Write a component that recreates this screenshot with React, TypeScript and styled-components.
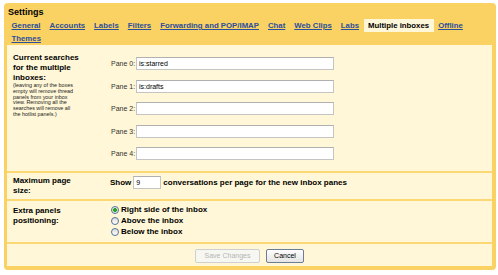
import styled, { createGlobalStyle } from 'styled-components';

const GlobalStyle = createGlobalStyle`
  html, body {
    margin: 0;
    padding: 0;
    background: #fff;
  }
  body {
    font-family: "Liberation Sans", Arial, sans-serif;
    color: #000;
  }
`;

const Frame = styled.div`
  margin: 3px 0 0 4px;
  width: 492px;
  height: 267px;
  box-sizing: border-box;
  background: #fad163;
  border-radius: 4px;
  padding: 3px 4px 4px 3px;
  display: flex;
  flex-direction: column;
`;

const Title = styled.div`
  font-size: 9px;
  font-weight: bold;
  line-height: 13px;
  padding-left: 1px;
`;

const Tabs = styled.div`
  display: flex;
  flex-wrap: wrap;
`;

const Tab = styled.a<{ $active?: boolean }>`
  display: block;
  padding: 0 4.5px;
  height: 13px;
  line-height: 13px;
  font-size: 7.8px;
  font-weight: bold;
  cursor: pointer;
  color: ${(p) => (p.$active ? '#000' : '#2a4f9c')};
  background: ${(p) => (p.$active ? '#fff7d7' : 'transparent')};
  text-decoration: ${(p) => (p.$active ? 'none' : 'underline')};
`;

const Panel = styled.div`
  flex: 1;
  background: #fff7d7;
  display: flex;
  flex-direction: column;
`;

const Section = styled.div<{ $divider?: boolean }>`
  display: grid;
  grid-template-columns: 103px 1fr;
  border-top: ${(p) => (p.$divider ? '2px solid #fcd874' : 'none')};
`;

const Label = styled.div<{ $top: number }>`
  padding: ${(p) => p.$top}px 0 0 6px;
  font-size: 8px;
  font-weight: bold;
  line-height: 10px;
`;

const Hint = styled.div`
  font-size: 5.4px;
  font-weight: normal;
  line-height: 5.9px;
  color: #222;
`;

const Field = styled.div<{ $top: number; $bottom: number; $gap?: number }>`
  padding: ${(p) => p.$top}px 0 ${(p) => p.$bottom}px 0;
  display: flex;
  flex-direction: column;
  gap: ${(p) => p.$gap ?? 0}px;
`;

const PaneRow = styled.div`
  display: flex;
  align-items: center;
  height: 13px;
`;

const PaneName = styled.span`
  width: 25px;
  padding-left: 1px;
  font-size: 7px;
  color: #333;
`;

const TextBox = styled.input<{ $w: number }>`
  box-sizing: border-box;
  width: ${(p) => p.$w}px;
  height: 13px;
  margin: 0;
  padding: 0 2px;
  border: 1px solid #c4c4c4;
  border-top-color: #b0b0b0;
  background: #fff;
  font-family: "Liberation Sans", Arial, sans-serif;
  font-size: 7px;
  color: #000;
  outline: none;
`;

const InlineRow = styled.div`
  display: flex;
  align-items: center;
  height: 13px;
  font-size: 8px;
  font-weight: bold;
  gap: 2px;
`;

const RadioRow = styled.label`
  display: flex;
  align-items: center;
  height: 11px;
  font-size: 8px;
  font-weight: bold;
  gap: 2px;
`;

const Radio = styled.span<{ $checked?: boolean }>`
  width: 8px;
  height: 8px;
  box-sizing: border-box;
  border-radius: 50%;
  margin-left: 1px;
  border: 1px solid #55709f;
  background: ${(p) =>
    p.$checked
      ? 'radial-gradient(circle, #2b9e2b 0 1.6px, #d8ecd0 2.2px, #fff 100%)'
      : 'linear-gradient(#dedcd4, #fff)'};
`;

const ButtonBar = styled.div`
  border-top: 2px solid #fcd874;
  display: flex;
  justify-content: center;
  gap: 6px;
  padding: 5px 0 3px;
`;

const Button = styled.button<{ $w: number }>`
  box-sizing: border-box;
  width: ${(p) => p.$w}px;
  height: 14px;
  padding: 0;
  font-family: "Liberation Sans", Arial, sans-serif;
  font-size: 7px;
  border-radius: 2px;
  color: #000;
  border: 1px solid #6f7c96;
  background: linear-gradient(#fff, #e4e4e4);
  &:disabled {
    color: #b4b4b4;
    border-color: #cfcfcf;
    background: #f7f7f2;
  }
`;

const tabs = [
  'General',
  'Accounts',
  'Labels',
  'Filters',
  'Forwarding and POP/IMAP',
  'Chat',
  'Web Clips',
  'Labs',
  'Multiple inboxes',
  'Offline',
  'Themes',
];

const panes = ['is:starred', 'is:drafts', '', '', ''];

export default function App() {
  return (
    <>
      <GlobalStyle />
      <Frame>
        <Title>Settings</Title>
        <Tabs>
          {tabs.map((t) => (
            <Tab key={t} $active={t === 'Multiple inboxes'}>
              {t}
            </Tab>
          ))}
        </Tabs>
        <Panel>
          <Section>
            <Label $top={7.7}>
              Current searches
              <br />
              for the multiple
              <br />
              inboxes:
              <Hint>
                (leaving any of the boxes
                <br />
                empty will remove thread
                <br />
                panels from your inbox
                <br />
                view. Removing all the
                <br />
                searches will remove all
                <br />
                the hotlist panels.)
              </Hint>
            </Label>
            <Field $top={12} $bottom={11} $gap={9.5}>
              {panes.map((v, i) => (
                <PaneRow key={i}>
                  <PaneName>Pane {i}:</PaneName>
                  <TextBox $w={198} defaultValue={v} />
                </PaneRow>
              ))}
            </Field>
          </Section>
          <Section $divider>
            <Label $top={2.7}>
              Maximum page
              <br />
              size:
            </Label>
            <Field $top={2.7} $bottom={10.3}>
              <InlineRow>
                Show
                <TextBox $w={28} defaultValue="9" />
                conversations per page for the new inbox panes
              </InlineRow>
            </Field>
          </Section>
          <Section $divider>
            <Label $top={4.7}>
              Extra panels
              <br />
              positioning:
            </Label>
            <Field $top={3.5} $bottom={4.5}>
              <RadioRow>
                <Radio $checked />
                Right side of the inbox
              </RadioRow>
              <RadioRow>
                <Radio />
                Above the inbox
              </RadioRow>
              <RadioRow>
                <Radio />
                Below the inbox
              </RadioRow>
            </Field>
          </Section>
          <ButtonBar>
            <Button $w={65} disabled>
              Save Changes
            </Button>
            <Button $w={38}>Cancel</Button>
          </ButtonBar>
        </Panel>
      </Frame>
    </>
  );
}
